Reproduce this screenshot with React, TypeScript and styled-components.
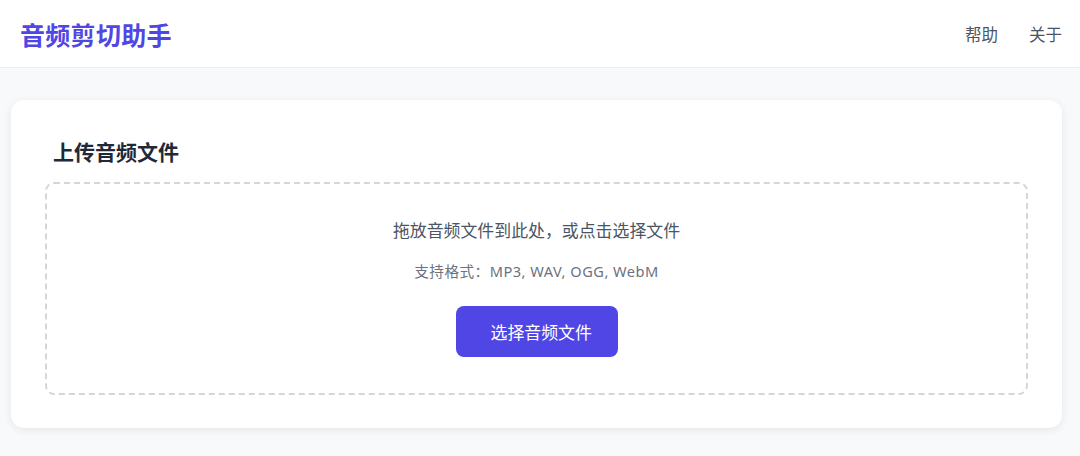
import React from "react";
import styled, { createGlobalStyle } from "styled-components";

const Global = createGlobalStyle`
  html, body { margin: 0; padding: 0; }
  body {
    background: #f8f9fb;
    font-family: "Noto Sans", "Noto Sans CJK SC", sans-serif;
    width: 1080px;
    height: 456px;
    overflow: hidden;
  }
  * { box-sizing: border-box; }
`;

const Header = styled.header`
  height: 68px;
  background: #ffffff;
  border-bottom: 1px solid #eceef2;
  display: flex;
  align-items: center;
  justify-content: space-between;
  padding: 0 18px 0 20px;
`;

const Logo = styled.div`
  font-size: 25px;
  font-weight: 700;
  color: #4f46e5;
  letter-spacing: 0.3px;
`;

const Nav = styled.nav`
  display: flex;
  gap: 31px;
`;

const NavLink = styled.a`
  font-size: 16.5px;
  color: #4b5563;
  text-decoration: none;
`;

const Main = styled.main`
  padding: 32px 18px 0 11px;
`;

const Card = styled.section`
  background: #ffffff;
  border-radius: 13px;
  box-shadow: 0 2px 8px rgba(0, 0, 0, 0.08);
  padding: 34px 34px 33px 34px;
`;

const Title = styled.h2`
  margin: 0 0 12px 8px;
  font-size: 21px;
  line-height: 36px;
  font-weight: 700;
  color: #1f2937;
`;

const DropZone = styled.div`
  border: 2px dashed #d4d6da;
  border-radius: 9px;
  padding: 34px 20px 36px;
  display: flex;
  flex-direction: column;
  align-items: center;
`;

const Prompt = styled.p`
  margin: 0;
  font-size: 16.9px;
  line-height: 25px;
  color: #4b5563;
`;

const Formats = styled.p`
  margin: 17px 0 0;
  font-size: 14.6px;
  line-height: 22px;
  letter-spacing: 0.5px;
  color: #6b7280;
`;

const UploadButton = styled.button`
  margin-top: 24px;
  width: 162px;
  height: 51px;
  padding: 0 25px 0 35px;
  border: none;
  border-radius: 8px;
  background: #4f46e5;
  color: #ffffff;
  font-family: inherit;
  font-size: 16.9px;
  text-align: left;
  cursor: pointer;
`;

export default function App() {
  return (
    <>
      <Global />
      <Header>
        <Logo>音频剪切助手</Logo>
        <Nav>
          <NavLink href="#">帮助</NavLink>
          <NavLink href="#">关于</NavLink>
        </Nav>
      </Header>
      <Main>
        <Card>
          <Title>上传音频文件</Title>
          <DropZone>
            <Prompt>拖放音频文件到此处，或点击选择文件</Prompt>
            <Formats>支持格式：MP3, WAV, OGG, WebM</Formats>
            <UploadButton>选择音频文件</UploadButton>
          </DropZone>
        </Card>
      </Main>
    </>
  );
}
